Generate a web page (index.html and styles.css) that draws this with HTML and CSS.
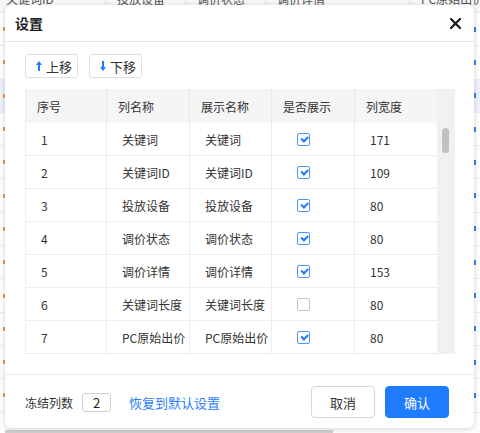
FILE: index.html
```html
<!DOCTYPE html>
<html lang="zh-CN">
<head>
<meta charset="utf-8">
<title>设置</title>
<link rel="stylesheet" href="styles.css">
</head>
<body>
<div class="page">
  <div class="bg-head">
    <span class="bh c1">关键词ID</span>
    <span class="bh c2">投放设备</span>
    <span class="bh c3">调价状态</span>
    <span class="bh c4">调价详情</span>
    <span class="bh c5"></span>
    <span class="bh c6">PC原始出价</span>
  </div>
  <div class="bg-row"><i class="mk"></i><i class="lk"></i></div>
  <div class="bg-row"><i class="mk"></i><i class="lk"></i></div>
  <div class="bg-row hl"><i class="mk"></i><i class="lk"></i></div>
  <div class="bg-row"><i class="mk"></i><i class="lk"></i></div>
  <div class="bg-row"><i class="mk"></i><i class="lk"></i></div>
  <div class="bg-row"><i class="mk"></i><i class="lk"></i></div>
  <div class="bg-row"><i class="mk"></i><i class="lk"></i></div>
  <div class="bg-row"><i class="mk"></i><i class="lk"></i></div>
  <div class="bg-row"><i class="mk"></i><i class="lk"></i></div>
  <div class="bg-row"><i class="mk"></i><i class="lk"></i></div>
  <div class="bg-row"><i class="mk"></i><i class="lk"></i></div>
  <div class="bg-row"><i class="mk"></i><i class="lk"></i></div>
  <div class="hscroll"></div>
</div>

<div class="modal">
  <div class="modal-head">
    <span class="title">设置</span>
    <svg class="close" width="11" height="11" viewBox="0 0 11 11"><path d="M1 1L10 10M10 1L1 10" stroke="#1a1a1a" stroke-width="2.2" stroke-linecap="round"/></svg>
  </div>
  <div class="modal-body">
    <div class="tools">
      <button class="btn-sm"><svg width="6" height="10" viewBox="0 0 6 10"><path d="M3 0L6 4H4V10H2V4H0Z" fill="#1e7bff"/></svg>上移</button>
      <button class="btn-sm"><svg width="6" height="10" viewBox="0 0 6 10"><path d="M3 10L6 6H4V0H2V6H0Z" fill="#1e7bff"/></svg>下移</button>
    </div>
    <div class="table-wrap">
      <div class="table">
        <div class="tr th">
          <div class="cell">序号</div><div class="cell">列名称</div><div class="cell">展示名称</div><div class="cell">是否展示</div><div class="cell">列宽度</div>
        </div>
        <div class="tr">
          <div class="cell">1</div><div class="cell">关键词</div><div class="cell">关键词</div><div class="cell"><span class="cb on"></span></div><div class="cell">171</div>
        </div>
        <div class="tr">
          <div class="cell">2</div><div class="cell">关键词ID</div><div class="cell">关键词ID</div><div class="cell"><span class="cb on"></span></div><div class="cell">109</div>
        </div>
        <div class="tr">
          <div class="cell">3</div><div class="cell">投放设备</div><div class="cell">投放设备</div><div class="cell"><span class="cb on"></span></div><div class="cell">80</div>
        </div>
        <div class="tr">
          <div class="cell">4</div><div class="cell">调价状态</div><div class="cell">调价状态</div><div class="cell"><span class="cb on"></span></div><div class="cell">80</div>
        </div>
        <div class="tr">
          <div class="cell">5</div><div class="cell">调价详情</div><div class="cell">调价详情</div><div class="cell"><span class="cb on"></span></div><div class="cell">153</div>
        </div>
        <div class="tr">
          <div class="cell">6</div><div class="cell">关键词长度</div><div class="cell">关键词长度</div><div class="cell"><span class="cb"></span></div><div class="cell">80</div>
        </div>
        <div class="tr">
          <div class="cell">7</div><div class="cell">PC原始出价</div><div class="cell">PC原始出价</div><div class="cell"><span class="cb on"></span></div><div class="cell">80</div>
        </div>
      </div>
      <div class="gutter"><div class="thumb"></div></div>
    </div>
  </div>
  <div class="modal-foot">
    <div class="foot-left">
      <span class="lbl">冻结列数</span>
      <span class="num">2</span>
      <a class="link">恢复到默认设置</a>
    </div>
    <div class="foot-right">
      <button class="btn btn-cancel">取消</button>
      <button class="btn btn-ok">确认</button>
    </div>
  </div>
</div>
</body>
</html>
```

FILE: styles.css
```css
* { box-sizing: border-box; }
html, body { margin: 0; padding: 0; }
body {
  width: 480px;
  height: 433px;
  overflow: hidden;
  position: relative;
  background: #fff;
  font-family: "Noto Sans CJK SC", "Noto Sans", sans-serif;
  color: #333;
}
.page {
  height: 433px;
  display: flex;
  flex-direction: column;
  overflow: hidden;
}
.bg-head {
  height: 13px;
  flex: none;
  display: flex;
  background: #f7f8fa;
  border-bottom: 1px solid #ebeef5;
}
.bh {
  font-size: 12px;
  line-height: 12px;
  margin-top: -7px;
  color: #555;
  border-right: 1px solid #e4e7ed;
  padding-left: 6px;
  height: 20px;
  white-space: nowrap;
  overflow: hidden;
}
.c1 { width: 106px; }
.c2 { width: 80px; padding-left: 11px; }
.c3 { width: 80px; padding-left: 11px; }
.c4 { width: 80px; padding-left: 11px; border-right: none; }
.c5 { width: 64px; }
.c6 { flex: 1; padding-left: 11px; border-right: none; }
.bg-row {
  height: 33.3px;
  flex: none;
  display: flex;
  justify-content: space-between;
  align-items: center;
  border-bottom: 1px solid #ebeef5;
}
.bg-row.hl { background: #eef2fa; }
.mk {
  width: 2px;
  height: 4px;
  margin-left: 3px;
  background: #f39a3a;
}
.lk {
  width: 2px;
  height: 5px;
  margin-right: 4px;
  background: #3b82f6;
}
.hscroll {
  margin-top: auto;
  margin-left: 5px;
  width: 328px;
  height: 3px;
  flex: none;
  background: #d0d0d0;
}

.modal {
  position: absolute;
  left: 5px;
  top: 5px;
  width: 469px;
  height: 423px;
  background: #fff;
  border-radius: 6px;
  box-shadow: 0 1px 6px rgba(0, 0, 0, 0.18);
  display: flex;
  flex-direction: column;
}
.modal-head {
  height: 37px;
  flex: none;
  display: flex;
  align-items: center;
  justify-content: space-between;
  padding: 0 13px 0 10px;
  border-bottom: 1px solid #e8e8e8;
}
.title {
  font-size: 14px;
  font-weight: bold;
  color: #1f1f1f;
  line-height: 20px;
}
.close { display: block; margin-top: 1px; }
.modal-body {
  flex: 1;
  padding: 12px 19px 0 20px;
  border-bottom: 1px solid #ebebeb;
}
.tools {
  display: flex;
  gap: 11px;
  margin-bottom: 11px;
}
.btn-sm {
  height: 24px;
  width: 53px;
  padding: 0 0 0 10px;
  border: 1px solid #dcdfe6;
  border-radius: 3px;
  background: #fff;
  font-family: inherit;
  font-size: 13px;
  color: #333;
  display: flex;
  align-items: center;
  gap: 4px;
}
.btn-sm svg { display: block; }
.table-wrap {
  display: flex;
  height: 265px;
}
.table {
  width: 412px;
  border-left: 1px solid #ebeef5;
}
.tr {
  display: grid;
  grid-template-columns: 81px 83px 82px 83px 82px;
  height: 33px;
  border-bottom: 1px solid #ebeef5;
}
.tr.th {
  height: 34px;
  background: #f5f5f5;
  border-bottom: none;
}
.cell {
  display: flex;
  align-items: center;
  font-size: 12px;
  color: #333;
  padding-left: 15px;
  border-right: 1px solid #ebeef5;
  white-space: nowrap;
  overflow: hidden;
}
.th .cell { padding-left: 11px; border-right-color: #e8e8e8; }
.tr .cell:nth-child(4) { padding-left: 25px; }
.th .cell:nth-child(4) { padding-left: 11px; }
.tr .cell:nth-child(5) { border-right: none; }
.cb {
  width: 13px;
  height: 13px;
  border: 1px solid #c4c4c4;
  border-radius: 2px;
  background: #fff;
  position: relative;
}
.cb.on { border-color: #4d94ff; }
.cb.on::after {
  content: "";
  position: absolute;
  left: 3px;
  top: 2.5px;
  width: 5px;
  height: 2.5px;
  border-left: 2px solid #1e7bff;
  border-bottom: 2px solid #1e7bff;
  transform: rotate(-45deg);
}
.gutter {
  width: 18px;
  background: #f1f1f1;
  padding: 39px 0 0 5px;
}
.thumb {
  width: 7px;
  height: 25px;
  border-radius: 4px;
  background: #c1c1c1;
}
.modal-foot {
  height: 53px;
  flex: none;
  display: flex;
  align-items: center;
  justify-content: space-between;
  padding: 1px 25px 0 20px;
}
.foot-left {
  display: flex;
  align-items: center;
  font-size: 12px;
}
.lbl { color: #333; }
.num {
  width: 29px;
  height: 19px;
  margin-left: 9px;
  border: 1px solid #d0d0d0;
  border-radius: 3px;
  display: flex;
  align-items: center;
  justify-content: center;
  font-size: 13px;
  color: #222;
}
.link {
  margin-left: 18px;
  font-size: 13px;
  color: #2d7ff9;
}
.foot-right { display: flex; gap: 10px; }
.btn {
  width: 64px;
  height: 32px;
  border-radius: 4px;
  font-family: inherit;
  font-size: 13px;
  padding: 0;
}
.btn-cancel {
  background: #fff;
  border: 1px solid #d4d7de;
  color: #333;
}
.btn-ok {
  background: #1f7cff;
  border: 1px solid #1f7cff;
  color: #fff;
}
```
